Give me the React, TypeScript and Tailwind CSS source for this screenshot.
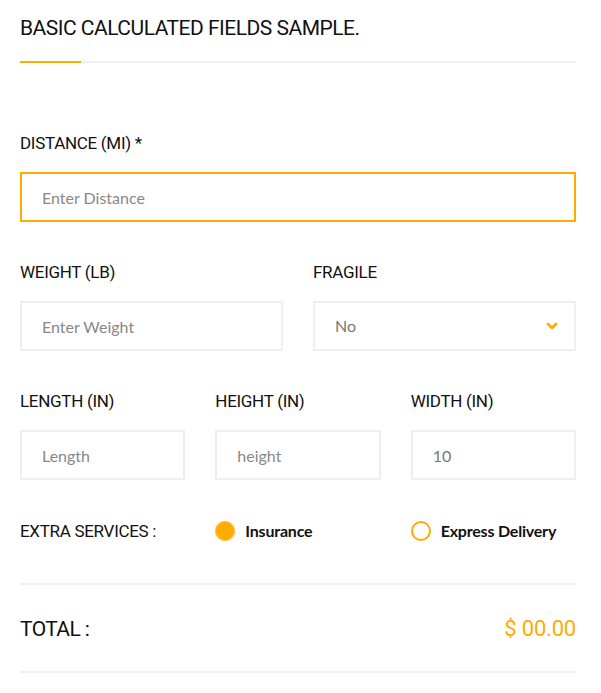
import { useState } from "react";

const head = "font-['Roboto','Liberation_Sans',sans-serif]";
const body = "font-['Lato','Liberation_Sans',sans-serif]";

const Label = ({ children }: { children: React.ReactNode }) => (
  <label className={`${head} block text-[17px] leading-[20px] tracking-[-0.3px] text-[#111] uppercase`}>
    {children}
  </label>
);

const inputCls = `${body} h-[50px] w-full border-2 border-[#efefef] bg-white px-5 text-[16px] text-[#777] placeholder:text-[#888] outline-none`;

const Radio = ({ checked, label, onClick }: { checked: boolean; label: string; onClick: () => void }) => (
  <button onClick={onClick} className="flex items-center gap-[10px]">
    {checked ? (
      <span className="h-5 w-5 rounded-full bg-[#ffab00] ring-1 ring-inset ring-[#ffc94d]" />
    ) : (
      <span className="h-5 w-5 rounded-full border-2 border-[#ffab00] bg-white" />
    )}
    <span className={`${body} text-[16px] font-bold text-[#111] tracking-[-0.2px]`}>{label}</span>
  </button>
);

export default function App() {
  const [insurance, setInsurance] = useState(true);
  const [express, setExpress] = useState(false);

  return (
    <div className="min-h-screen bg-white pt-[14px]">
      <div className="ml-5 w-[556px]">
        <h1 className={`${head} text-[21px] leading-[28px] tracking-[-0.5px] text-[#111] uppercase`}>
          Basic Calculated Fields Sample.
        </h1>
        <div className="mt-[19px] flex h-[2px] bg-[#f1f1f1]">
          <div className="w-[61px] bg-[#ffab00]" />
        </div>

        <div className="mt-[70px]">
          <Label>Distance (MI) *</Label>
          <input
            className={`${inputCls} mt-[19px] border-[#ffab00]`}
            placeholder="Enter Distance"
            autoFocus
          />
        </div>

        <div className="mt-[40px] grid grid-cols-2 gap-x-[30px]">
          <div>
            <Label>Weight (LB)</Label>
            <input className={`${inputCls} mt-[19px]`} placeholder="Enter Weight" />
          </div>
          <div>
            <Label>Fragile</Label>
            <div className="relative mt-[19px]">
              <select className={`${inputCls} appearance-none`} defaultValue="No">
                <option>No</option>
                <option>Yes</option>
              </select>
              <svg
                className="pointer-events-none absolute right-[18px] top-1/2 -translate-y-1/2"
                width="12"
                height="8"
                viewBox="0 0 12 8"
                fill="none"
                stroke="#ffab00"
                strokeWidth="2.6"
                strokeLinecap="round"
                strokeLinejoin="round"
              >
                <path d="M2 2l4 4 4-4" />
              </svg>
            </div>
          </div>
        </div>

        <div className="mt-[40px] grid grid-cols-3 gap-x-[30px]">
          <div>
            <Label>Length (IN)</Label>
            <input className={`${inputCls} mt-[19px]`} placeholder="Length" />
          </div>
          <div>
            <Label>Height (IN)</Label>
            <input className={`${inputCls} mt-[19px]`} placeholder="height" />
          </div>
          <div>
            <Label>Width (IN)</Label>
            <input className={`${inputCls} mt-[19px]`} defaultValue="10" />
          </div>
        </div>

        <div className="mt-[39px] grid grid-cols-3 items-center gap-x-[30px]">
          <Label>Extra Services :</Label>
          <Radio checked={insurance} label="Insurance" onClick={() => setInsurance(!insurance)} />
          <Radio checked={express} label="Express Delivery" onClick={() => setExpress(!express)} />
        </div>

        <div className="mt-[40px] h-[2px] bg-[#f1f1f1]" />
        <div className="flex items-center justify-between pt-[31px] pb-[29px]">
          <span className={`${head} text-[21px] leading-[26px] tracking-[-0.6px] text-[#111]`}>TOTAL :</span>
          <span className={`${head} text-[22px] leading-[26px] tracking-[-0.2px] text-[#ffab00]`}>$ 00.00</span>
        </div>
        <div className="h-[2px] bg-[#f1f1f1]" />
      </div>
    </div>
  );
}
